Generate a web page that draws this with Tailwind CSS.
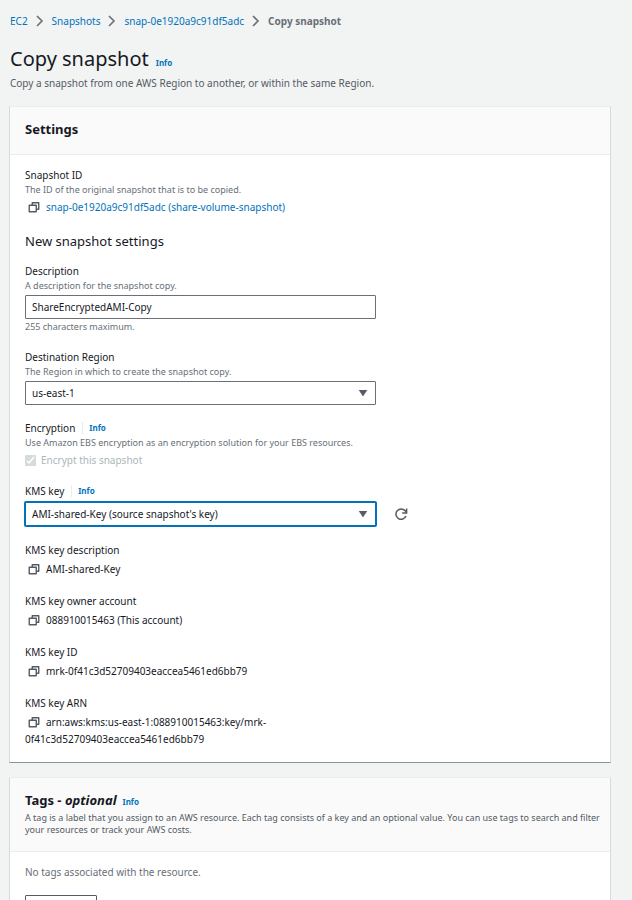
<!DOCTYPE html>
<html lang="en">
<head>
    <meta charset="UTF-8">
    <meta name="viewport" content="width=device-width, initial-scale=1.0">
    <title>Copy snapshot</title>
    <script src="https://cdn.jsdelivr.net/npm/@tailwindcss/browser@4"></script>
</head>
<body class="bg-[#f2f3f3] text-[#16191f] font-['Noto_Sans',sans-serif] text-[10px] leading-[16px] min-h-screen">

    <!-- Shared icons -->
    <svg class="hidden">
        <symbol id="icon-copy" viewBox="0 0 12 12">
            <path d="M1.250 4.250h7v6.500h-7zM4.250 4.250V1.750h6.500v6.500H8.250" fill="none" stroke="#545b64" stroke-width="1.400" stroke-linejoin="round"/>
        </symbol>
        <symbol id="icon-chevron" viewBox="0 0 8 12">
            <path d="M1 1l5 5-5 5" fill="none" stroke="#687078" stroke-width="1.600"/>
        </symbol>
        <symbol id="icon-caret" viewBox="0 0 10 6">
            <path d="M1 0h8L5 6z" fill="#545b64" stroke="#545b64" stroke-width=".5" stroke-linejoin="round"/>
        </symbol>
    </svg>

    <div class="pl-[9px] pr-[21px] pt-3 pb-5">

        <nav aria-label="Breadcrumbs" class="px-px">
            <ol class="flex items-center gap-2 leading-[18px]">
                <li><a href="#" class="text-[#0073bb]">EC2</a></li>
                <li><svg class="w-2 h-3"><use href="#icon-chevron"/></svg></li>
                <li><a href="#" class="text-[#0073bb]">Snapshots</a></li>
                <li><svg class="w-2 h-3"><use href="#icon-chevron"/></svg></li>
                <li><a href="#" class="text-[#0073bb]">snap-0e1920a9c91df5adc</a></li>
                <li><svg class="w-2 h-3"><use href="#icon-chevron"/></svg></li>
                <li class="font-bold text-[#687078]">Copy snapshot</li>
            </ol>
        </nav>

        <header class="px-px mt-[14px] mb-[15px]">
            <div class="flex items-baseline gap-[7px]">
                <h1 class="text-[20px] leading-[30px]">Copy snapshot</h1>
                <a href="#" class="text-[8px] leading-[12px] font-bold text-[#0073bb]">Info</a>
            </div>
            <p class="mt-px text-[#545b64]">Copy a snapshot from one AWS Region to another, or within the same Region.</p>
        </header>

        <main class="flex flex-col gap-[14px]">

            <!-- Settings -->
            <section class="bg-white border border-[#d5dbdb] border-t-[#eaeded] border-b-[#879596]">
                <div class="bg-[#fafafa] border-b border-[#eaeded] px-[15px] pt-3 pb-[14px]">
                    <h2 class="text-[13px] leading-[21px] font-bold">Settings</h2>
                </div>

                <div class="px-[15px] pt-3 pb-[14px] flex flex-col gap-[15px]">
                    <div>
                        <div>Snapshot ID</div>
                        <p class="text-[9px] leading-[14px] text-[#687078]">The ID of the original snapshot that is to be copied.</p>
                        <div class="mt-[2px] leading-[17px]">
                            <button type="button" aria-label="Copy snapshot ID" class="align-[-2px] ml-[3px] mr-[6px]"><svg class="size-3"><use href="#icon-copy"/></svg></button><a href="#" class="text-[#0073bb]">snap-0e1920a9c91df5adc (share-volume-snapshot)</a>
                        </div>
                    </div>

                    <h3 class="text-[13px] leading-[20px] -mb-[3px]">New snapshot settings</h3>

                    <div>
                        <label for="description" class="block">Description</label>
                        <p class="text-[9px] leading-[14px] text-[#687078]">A description for the snapshot copy.</p>
                        <input id="description" type="text" value="ShareEncryptedAMI-Copy" class="block mt-[2px] w-full max-w-[351px] h-6 px-[6px] bg-white border border-[#687078] rounded-[1px]">
                        <p class="mt-px text-[9px] leading-[14px] text-[#687078]">255 characters maximum.</p>
                    </div>

                    <div>
                        <label for="region" class="block">Destination Region</label>
                        <p class="text-[9px] leading-[14px] text-[#687078]">The Region in which to create the snapshot copy.</p>
                        <div class="relative mt-[2px] max-w-[351px]">
                            <select id="region" class="appearance-none block w-full h-6 px-[6px] bg-white border border-[#687078] rounded-[1px]">
                                <option>us-east-1</option>
                            </select>
                            <svg class="absolute right-2 top-[9px] w-[10px] h-[6px] pointer-events-none"><use href="#icon-caret"/></svg>
                        </div>
                    </div>

                    <div>
                        <div class="flex items-center">
                            <span>Encryption</span>
                            <a href="#" class="ml-[7px] pl-[6px] border-l border-[#eaeded] text-[8px] leading-[12px] font-bold text-[#0073bb]">Info</a>
                        </div>
                        <p class="text-[9px] leading-[14px] text-[#687078]">Use Amazon EBS encryption as an encryption solution for your EBS resources.</p>
                        <label class="mt-[2px] flex items-center gap-[5px] text-[#aab7b8]">
                            <span class="relative size-[11px]">
                                <input type="checkbox" checked disabled class="appearance-none block size-[11px] rounded-[1px] bg-[#d5dbdb]">
                                <svg class="absolute inset-0 size-[11px]" viewBox="0 0 11 11"><path d="M2 6l2 2 5-6" fill="none" stroke="#fff" stroke-width="1.500"/></svg>
                            </span>
                            Encrypt this snapshot
                        </label>
                    </div>

                    <div>
                        <div class="flex items-center">
                            <label for="kms-key">KMS key</label>
                            <a href="#" class="ml-[7px] pl-[6px] border-l border-[#eaeded] text-[8px] leading-[12px] font-bold text-[#0073bb]">Info</a>
                        </div>
                        <div class="mt-[2px] flex items-center gap-[18px]">
                            <div class="relative w-full max-w-[353px] -ml-px">
                                <select id="kms-key" class="appearance-none block w-full h-[26px] px-[6px] bg-white border-2 border-[#0073bb] rounded-[2px]">
                                    <option>AMI-shared-Key (source snapshot's key)</option>
                                </select>
                                <svg class="absolute right-[9px] top-[10px] w-[10px] h-[6px] pointer-events-none"><use href="#icon-caret"/></svg>
                            </div>
                            <button type="button" aria-label="Refresh KMS keys">
                                <svg class="size-[13px]" viewBox="0 0 13 13" fill="none" stroke="#545b64" stroke-width="1.500"><path d="M11 8A5.200 5.200 0 1 1 10.200 2.800L11.400 4.200M11.600 .5v4.500H7.200"/></svg>
                            </button>
                        </div>
                    </div>

                    <div>
                        <div>KMS key description</div>
                        <div class="mt-[3px] leading-[17px]">
                            <button type="button" aria-label="Copy KMS key description" class="align-[-2px] ml-[3px] mr-[6px]"><svg class="size-3"><use href="#icon-copy"/></svg></button>AMI-shared-Key
                        </div>
                    </div>

                    <div>
                        <div>KMS key owner account</div>
                        <div class="mt-[3px] leading-[17px]">
                            <button type="button" aria-label="Copy KMS key owner account" class="align-[-2px] ml-[3px] mr-[6px]"><svg class="size-3"><use href="#icon-copy"/></svg></button>088910015463 (This account)
                        </div>
                    </div>

                    <div>
                        <div>KMS key ID</div>
                        <div class="mt-[3px] leading-[17px]">
                            <button type="button" aria-label="Copy KMS key ID" class="align-[-2px] ml-[3px] mr-[6px]"><svg class="size-3"><use href="#icon-copy"/></svg></button>mrk-0f41c3d52709403eaccea5461ed6bb79
                        </div>
                    </div>

                    <div>
                        <div>KMS key ARN</div>
                        <div class="mt-[3px] leading-[17px] max-w-[351px]">
                            <button type="button" aria-label="Copy KMS key ARN" class="align-[-2px] ml-[3px] mr-[6px]"><svg class="size-3"><use href="#icon-copy"/></svg></button>arn:aws:kms:us-east-1:088910015463:key/mrk-<wbr>0f41c3d52709403eaccea5461ed6bb79
                        </div>
                    </div>
                </div>
            </section>

            <!-- Tags -->
            <section class="bg-white border border-[#d5dbdb] border-t-[#eaeded] border-b-[#879596]">
                <div class="bg-[#fafafa] border-b border-[#eaeded] pl-[15px] pr-1 pt-3 pb-[15px]">
                    <div class="flex items-baseline gap-[6px]">
                        <h2 class="text-[13px] leading-[21px] font-bold">Tags - <i>optional</i></h2>
                        <a href="#" class="text-[8px] leading-[12px] font-bold text-[#0073bb]">Info</a>
                    </div>
                    <p class="mt-px text-[9px] leading-[12px] text-[#545b64]">A tag is a label that you assign to an AWS resource. Each tag consists of a key and an optional value. You can use tags to search and filter your resources or track your AWS costs.</p>
                </div>
                <div class="px-[15px] pt-3 pb-[15px]">
                    <p class="text-[#687078]">No tags associated with the resource.</p>
                    <button type="button" class="mt-[15px] w-[72px] h-6 border border-[#545b64] rounded-[1px] font-bold text-[#545b64]">Add tag</button>
                </div>
            </section>

        </main>
    </div>
</body>
</html>
